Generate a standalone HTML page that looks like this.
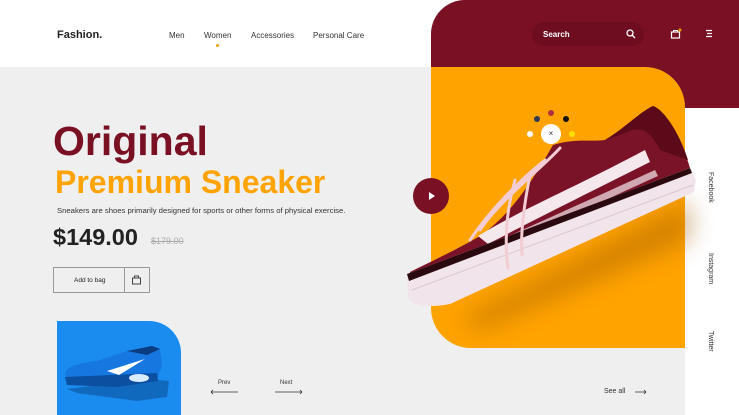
<!DOCTYPE html>
<html><head><meta charset="utf-8"><style>
*{margin:0;padding:0;box-sizing:border-box}
body{width:739px;height:415px;overflow:hidden;position:relative;background:#efefef;font-family:"Liberation Sans",sans-serif;color:#222}
.abs{position:absolute}
</style></head><body>
<div class="abs" style="left:0;top:0;width:739px;height:67px;background:#fff"></div>
<div class="abs" style="left:685px;top:100px;width:54px;height:315px;background:#fff"></div>
<div class="abs" style="left:431px;top:0;width:308px;height:108px;background:#7a1024;border-top-left-radius:34px"></div>
<div class="abs" style="left:431px;top:67px;width:254px;height:281px;background:#ffa300;border-top-right-radius:40px;border-bottom-left-radius:40px"></div>

<div class="abs" style="left:57px;top:29px;font-size:11px;font-weight:bold;color:#222">Fashion.</div>
<div class="abs" style="left:169px;top:31px;font-size:8px;color:#333">Men</div>
<div class="abs" style="left:204px;top:31px;font-size:8px;color:#333">Women</div>
<div class="abs" style="left:216px;top:44px;width:3px;height:3px;border-radius:50%;background:#f0a000"></div>
<div class="abs" style="left:251px;top:31px;font-size:8px;color:#333">Accessories</div>
<div class="abs" style="left:313px;top:31px;font-size:8px;color:#333">Personal Care</div>

<div class="abs" style="left:532px;top:22px;width:112px;height:24px;background:#6e0d20;border-radius:12px"></div>
<div class="abs" style="left:543px;top:30px;font-size:8px;font-weight:bold;color:#fff">Search</div>
<svg class="abs" style="left:626px;top:29px" width="10" height="10"><circle cx="4" cy="4" r="3" fill="none" stroke="#fff" stroke-width="1.3"/><path d="M6 6L9 9" stroke="#fff" stroke-width="1.3"/></svg>
<svg class="abs" style="left:670px;top:28px" width="12" height="12"><rect x="1.5" y="4" width="8" height="6" fill="none" stroke="#fff" stroke-width="1.2"/><path d="M3.5 4V2.5h4V4" fill="none" stroke="#fff"/><circle cx="10" cy="2" r="1.5" fill="#f0a000"/></svg>
<svg class="abs" style="left:705px;top:29px" width="8" height="9"><path d="M1 1.5h6M2 4.5h5M1 7.5h6" stroke="#fff" stroke-width="1.2"/></svg>

<div class="abs" style="left:53px;top:118px;font-size:41px;font-weight:bold;color:#7a1024;letter-spacing:0px">Original</div>
<div class="abs" style="left:55px;top:164px;font-size:32px;font-weight:bold;color:#ffa300">Premium Sneaker</div>
<div class="abs" style="left:57px;top:206px;font-size:7.7px;color:#333">Sneakers are shoes primarily designed for sports or other forms of physical exercise.</div>
<div class="abs" style="left:53px;top:224px;font-size:23.5px;font-weight:bold;color:#222">$149.00</div>
<div class="abs" style="left:151px;top:236px;font-size:9px;color:#aaa;text-decoration:line-through">$179.00</div>
<div class="abs" style="left:53px;top:267px;width:97px;height:26px;border:1px solid #999"></div>
<div class="abs" style="left:124px;top:267px;width:1px;height:26px;background:#999"></div>
<div class="abs" style="left:74px;top:277px;font-size:6.5px;color:#222">Add to bag</div>
<svg class="abs" style="left:131px;top:274px" width="12" height="12"><rect x="1.5" y="4" width="8" height="6" fill="none" stroke="#444"/><path d="M3.5 4V2h4v2" fill="none" stroke="#444"/></svg>

<div class="abs" style="left:57px;top:321px;width:124px;height:94px;background:#1a8cf0;border-top-right-radius:32px"></div>
<svg class="abs" style="left:57px;top:321px" width="124" height="94">
<path d="M10 68L20 72L80 80L110 76L112 60L90 58Z" fill="#0e5aa8" opacity=".7"/>
<path d="M8 52C10 45 22 42 40 40L70 30L95 25L103 28L105 45L100 58L60 62L10 60Z" fill="#1677e0"/>
<path d="M70 30L95 25L103 28L90 34Z" fill="#0a3d80"/>
<path d="M8 56L100 52L101 60L60 66L10 64Z" fill="#0b4fa0"/>
<path d="M50 50L88 38L62 54Z" fill="#fff"/>
<ellipse cx="82" cy="57" rx="10" ry="4" fill="#d8ecff"/>
</svg>

<div class="abs" style="left:218px;top:380px;font-size:6px;color:#333">Prev</div>
<svg class="abs" style="left:210px;top:389px" width="30" height="6"><path d="M1 3h27M1 3l2-2M1 3l2 2" stroke="#333" stroke-width=".8"/></svg>
<div class="abs" style="left:280px;top:380px;font-size:6px;color:#333">Next</div>
<svg class="abs" style="left:274px;top:389px" width="30" height="6"><path d="M1 3h27M28 3l-2-2M28 3l-2 2" stroke="#333" stroke-width=".8"/></svg>
<div class="abs" style="left:604px;top:388px;font-size:7px;color:#333">See all</div>
<svg class="abs" style="left:634px;top:389px" width="14" height="6"><path d="M1 3h11M12 3l-2-2M12 3l-2 2" stroke="#333" stroke-width=".8"/></svg>

<div class="abs" style="left:707px;top:172px;font-size:7px;color:#333;writing-mode:vertical-rl">Facebook</div>
<div class="abs" style="left:707px;top:253px;font-size:7px;color:#333;writing-mode:vertical-rl">Instagram</div>
<div class="abs" style="left:707px;top:331px;font-size:7px;color:#333;writing-mode:vertical-rl">Twitter</div>

<svg class="abs" style="left:0;top:0" width="739" height="415">
<defs><filter id="b" x="-50%" y="-50%" width="200%" height="200%"><feGaussianBlur stdDeviation="12"/></filter></defs>
<path d="M460 320L690 200L690 240L480 330Z" fill="#a05a00" opacity=".45" filter="url(#b)"/>
<!-- upper -->
<path d="M410 272C430 262 460 248 480 236C510 215 530 185 553 145C575 138 590 142 605 140C625 128 640 112 653 106C665 110 682 140 690 168L410 276Z" fill="#7a1228"/>
<path d="M605 140C625 128 640 112 653 106C665 110 680 135 688 160L660 150C650 130 640 125 625 133Z" fill="#5c0a1a"/>
<!-- stripe -->
<path d="M478 236C520 210 580 185 645 150L650 162C590 192 530 222 488 244Z" fill="#f5e8ec"/>
<path d="M500 240C540 222 600 195 655 170L658 176C605 200 545 228 505 246Z" fill="#f5e8ec" opacity=".7"/>
<!-- sole -->
<path d="M407 274L690 168L696 180L694 192L450 304C430 308 412 306 408 298Z" fill="#f1e4ea"/>
<path d="M407 274L690 168L692 173L409 281Z" fill="#2a0a0f"/>
<path d="M412 290L693 185" stroke="#d9c8cf" stroke-width="1"/>
<!-- laces -->
<path d="M560 148C540 170 500 200 480 230M545 160C520 180 490 210 470 240M515 180C505 215 505 245 508 268M530 175C525 200 520 230 522 255" stroke="#f2cdd3" stroke-width="3" fill="none" stroke-linecap="round"/>
</svg>

<div class="abs" style="left:413px;top:178px;width:36px;height:36px;border-radius:50%;background:#7a1024"></div>
<svg class="abs" style="left:428px;top:192px" width="8" height="8"><path d="M1 0L7 4L1 8Z" fill="#fff"/></svg>

<div class="abs" style="left:541px;top:124px;width:20px;height:20px;border-radius:50%;background:#fff;text-align:center;font-size:8px;line-height:20px;color:#333">×</div>
<div class="abs" style="left:527px;top:131px;width:6px;height:6px;border-radius:50%;background:#fff"></div>
<div class="abs" style="left:569px;top:131px;width:6px;height:6px;border-radius:50%;background:#ffe000"></div>
<div class="abs" style="left:534px;top:116px;width:6px;height:6px;border-radius:50%;background:#333a55"></div>
<div class="abs" style="left:548px;top:110px;width:6px;height:6px;border-radius:50%;background:#b03040"></div>
<div class="abs" style="left:563px;top:116px;width:6px;height:6px;border-radius:50%;background:#111"></div>
</body></html>
